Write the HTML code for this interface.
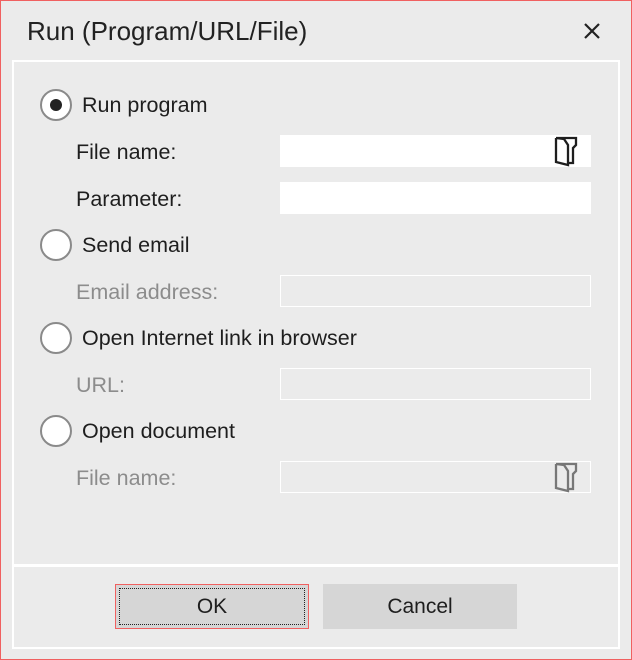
<!DOCTYPE html>
<html><head><style>
*{margin:0;padding:0;box-sizing:border-box}
body{width:632px;height:660px;background:#ebebeb;font-family:"Liberation Sans",sans-serif;color:#1e1e1e;position:relative;overflow:hidden}
.frame{position:absolute;left:0;top:0;width:632px;height:660px;border:1px solid #f06060}
.t{position:absolute;white-space:nowrap}
.title{left:27px;top:16px;font-size:26px;color:#222}
.panel{position:absolute;left:12px;top:60px;width:608px;height:589px;border:2px solid #fff}
.sep{position:absolute;left:12px;top:564px;width:608px;height:3px;background:#fff}
.radio{position:absolute;left:40px;width:32px;height:32px;border-radius:50%;background:#fff;border:2px solid #8a8a8a}
.radio.on::after{content:"";position:absolute;left:8px;top:8px;width:12px;height:12px;border-radius:50%;background:#222}
.lbl{font-size:21.5px}
.dis{color:#8c8c8c}
.in{position:absolute;left:280px;width:311px;height:32px;background:#fff}
.in.d{background:#ebebeb;border:1px solid #fff}
.btn{position:absolute;top:584px;height:45px;background:#d6d6d6;font-size:21px;text-align:center;line-height:45px}
</style></head><body>
<div class="frame"></div>
<div class="t title">Run (Program/URL/File)</div>
<svg style="position:absolute;left:582px;top:21px" width="20" height="20"><path d="M3 3L17 17M17 3L3 17" stroke="#222" stroke-width="2.2"/></svg>
<div class="panel"></div>
<div class="sep"></div>

<div class="radio on" style="top:89px"></div>
<div class="t lbl" style="left:82px;top:93px">Run program</div>
<div class="t lbl" style="left:76px;top:140px">File name:</div>
<div class="in" style="top:135px"></div>
<svg style="position:absolute;left:550px;top:133px" width="32" height="36"><path d="M6 5H26V12L23 15V30H18 M6 5V29L18 32V12L14 6 M6 5L14 6" fill="none" stroke="#1e1e1e" stroke-width="2.3"/></svg>
<div class="t lbl" style="left:76px;top:187px">Parameter:</div>
<div class="in" style="top:182px"></div>

<div class="radio" style="top:229px"></div>
<div class="t lbl" style="left:82px;top:233px">Send email</div>
<div class="t lbl dis" style="left:76px;top:280px">Email address:</div>
<div class="in d" style="top:275px"></div>

<div class="radio" style="top:322px"></div>
<div class="t lbl" style="left:82px;top:326px">Open Internet link in browser</div>
<div class="t lbl dis" style="left:76px;top:373px">URL:</div>
<div class="in d" style="top:368px"></div>

<div class="radio" style="top:415px"></div>
<div class="t lbl" style="left:82px;top:419px">Open document</div>
<div class="t lbl dis" style="left:76px;top:466px">File name:</div>
<div class="in d" style="top:461px"></div>
<svg style="position:absolute;left:550px;top:459px" width="32" height="36"><path d="M6 5H26V12L23 15V30H18 M6 5V29L18 32V12L14 6 M6 5L14 6" fill="none" stroke="#777" stroke-width="2.3"/></svg>

<div class="btn" style="left:115px;width:194px;border:1px solid #f06060;line-height:43px"><div style="position:absolute;left:3px;top:3px;right:3px;bottom:3px;border:1px dotted #222"></div>OK</div>
<div class="btn" style="left:323px;width:194px">Cancel</div>
</body></html>
